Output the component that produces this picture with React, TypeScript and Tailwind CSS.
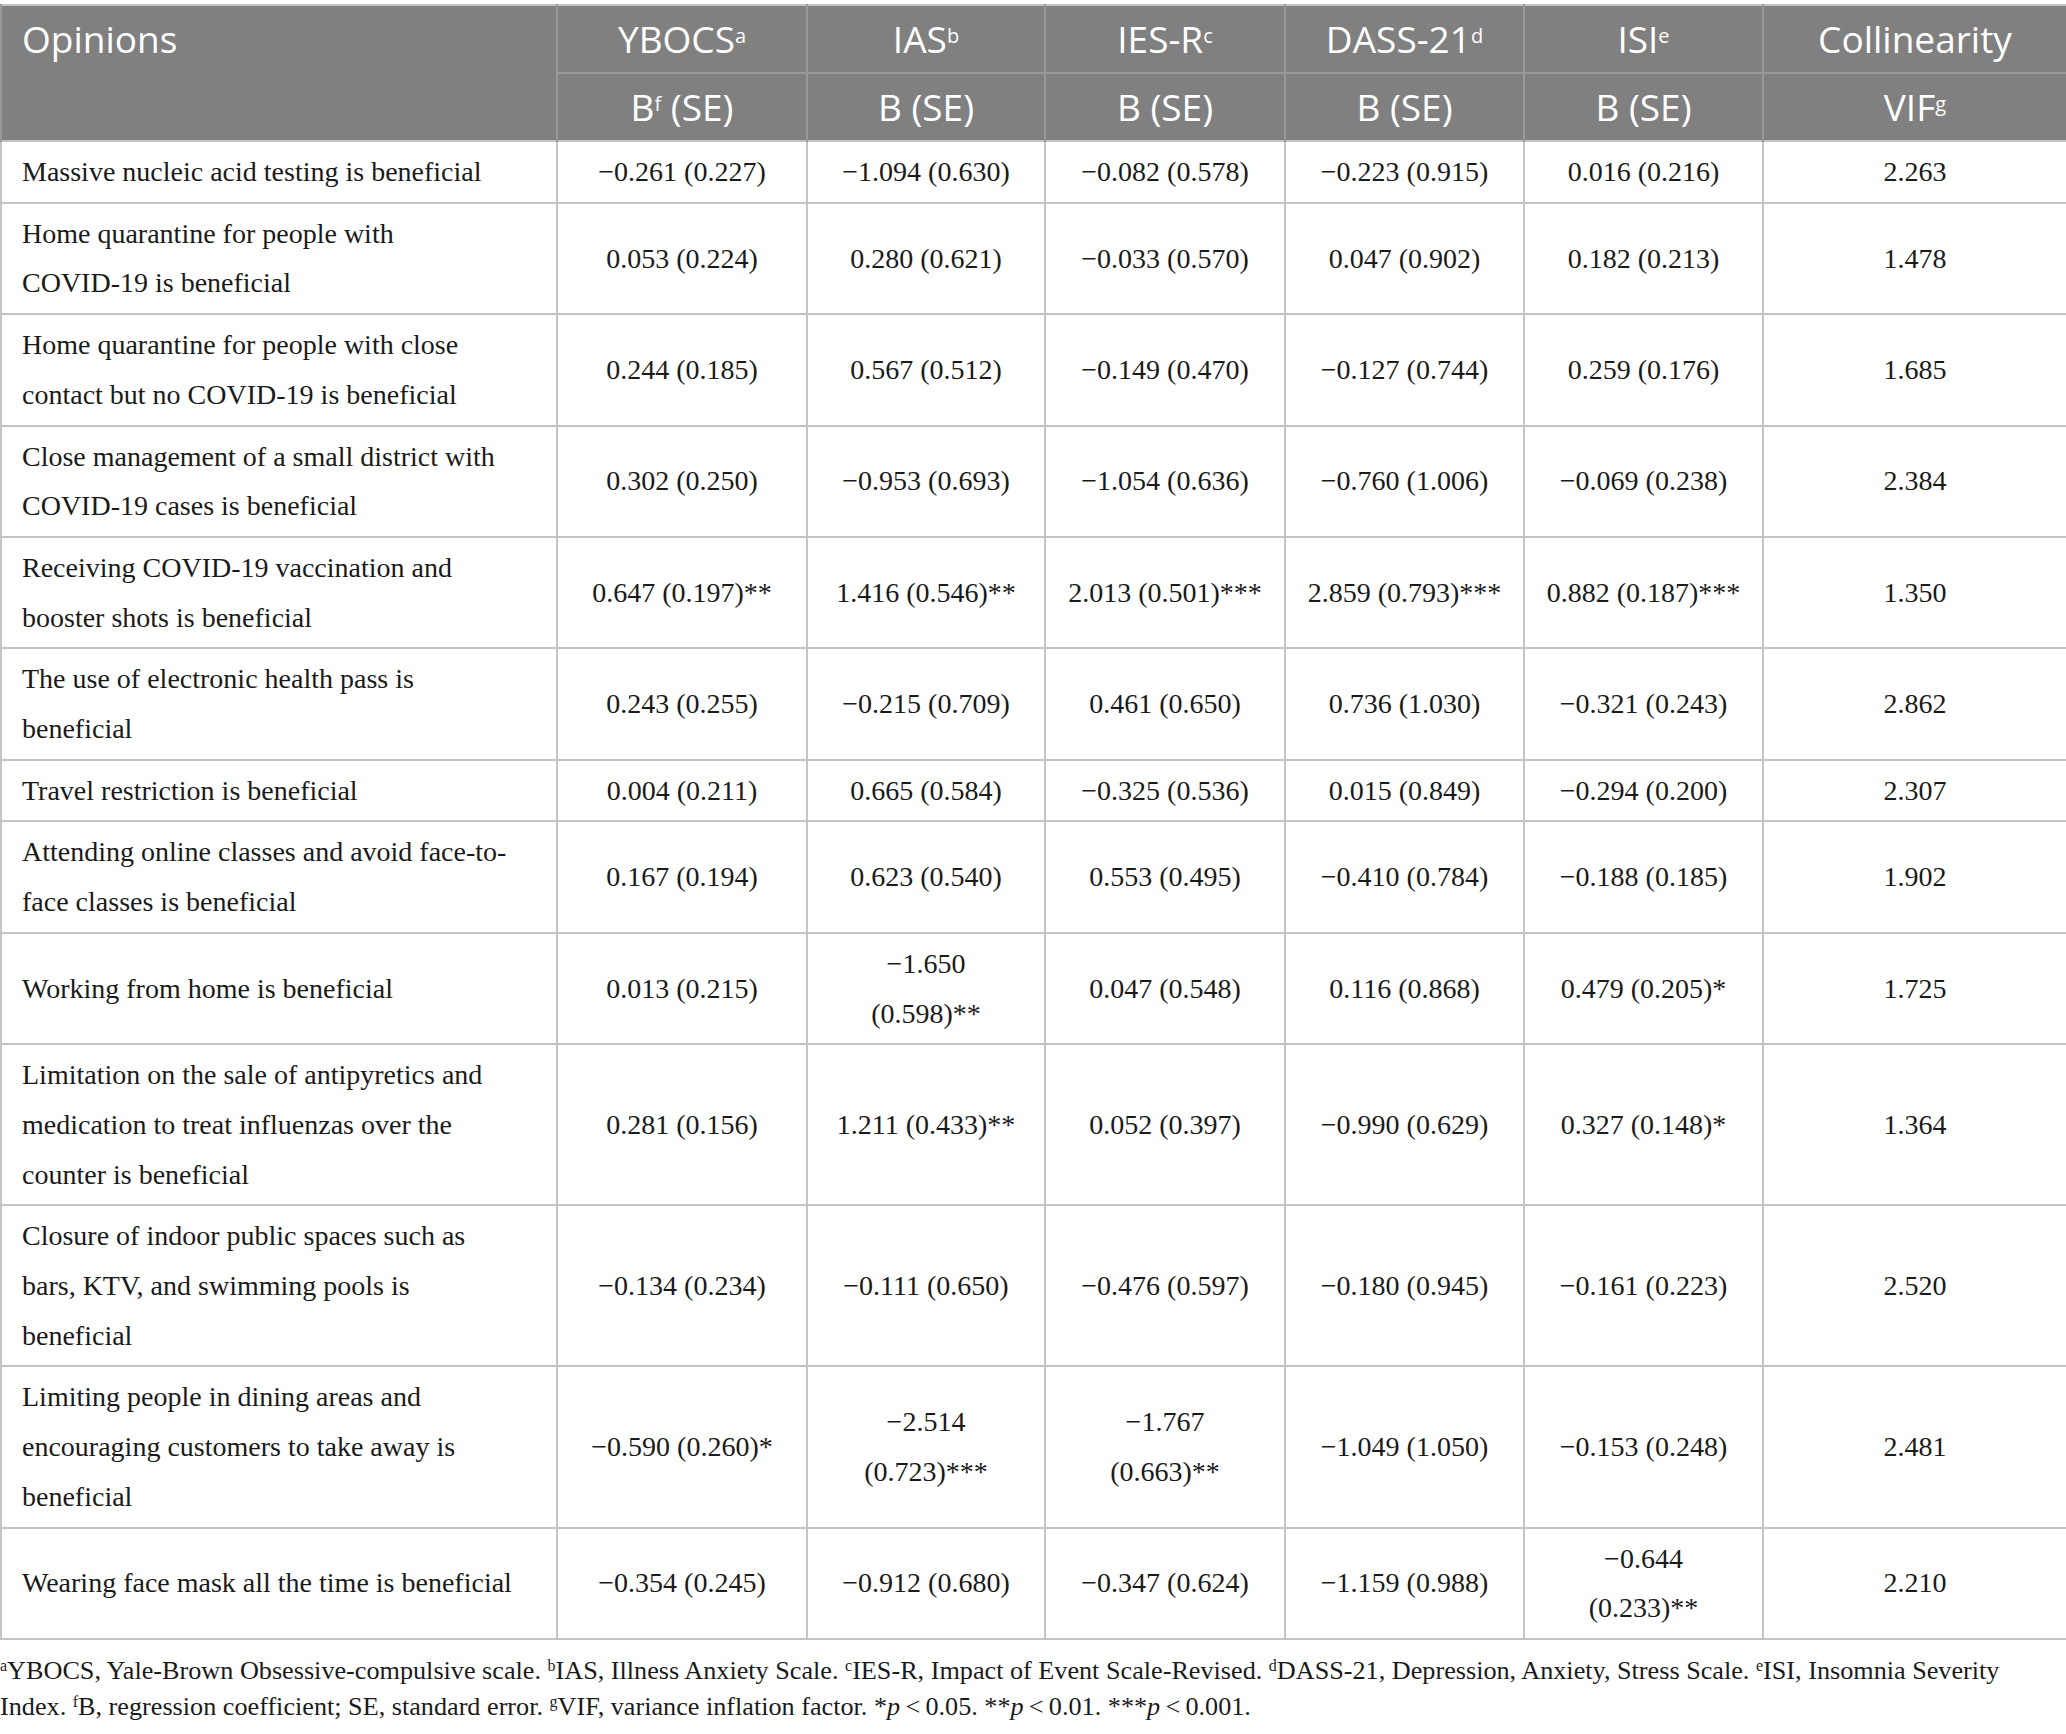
import React from "react";

type Row = {
  label: string[];
  values: string[][];
  vif: string;
};

const ROWS: Row[] = [
  {
    label: ["Massive nucleic acid testing is beneficial"],
    values: [["−0.261 (0.227)"], ["−1.094 (0.630)"], ["−0.082 (0.578)"], ["−0.223 (0.915)"], ["0.016 (0.216)"]],
    vif: "2.263",
  },
  {
    label: ["Home quarantine for people with", "COVID-19 is beneficial"],
    values: [["0.053 (0.224)"], ["0.280 (0.621)"], ["−0.033 (0.570)"], ["0.047 (0.902)"], ["0.182 (0.213)"]],
    vif: "1.478",
  },
  {
    label: ["Home quarantine for people with close", "contact but no COVID-19 is beneficial"],
    values: [["0.244 (0.185)"], ["0.567 (0.512)"], ["−0.149 (0.470)"], ["−0.127 (0.744)"], ["0.259 (0.176)"]],
    vif: "1.685",
  },
  {
    label: ["Close management of a small district with", "COVID-19 cases is beneficial"],
    values: [["0.302 (0.250)"], ["−0.953 (0.693)"], ["−1.054 (0.636)"], ["−0.760 (1.006)"], ["−0.069 (0.238)"]],
    vif: "2.384",
  },
  {
    label: ["Receiving COVID-19 vaccination and", "booster shots is beneficial"],
    values: [["0.647 (0.197)**"], ["1.416 (0.546)**"], ["2.013 (0.501)***"], ["2.859 (0.793)***"], ["0.882 (0.187)***"]],
    vif: "1.350",
  },
  {
    label: ["The use of electronic health pass is", "beneficial"],
    values: [["0.243 (0.255)"], ["−0.215 (0.709)"], ["0.461 (0.650)"], ["0.736 (1.030)"], ["−0.321 (0.243)"]],
    vif: "2.862",
  },
  {
    label: ["Travel restriction is beneficial"],
    values: [["0.004 (0.211)"], ["0.665 (0.584)"], ["−0.325 (0.536)"], ["0.015 (0.849)"], ["−0.294 (0.200)"]],
    vif: "2.307",
  },
  {
    label: ["Attending online classes and avoid face-to-", "face classes is beneficial"],
    values: [["0.167 (0.194)"], ["0.623 (0.540)"], ["0.553 (0.495)"], ["−0.410 (0.784)"], ["−0.188 (0.185)"]],
    vif: "1.902",
  },
  {
    label: ["Working from home is beneficial"],
    values: [["0.013 (0.215)"], ["−1.650", "(0.598)**"], ["0.047 (0.548)"], ["0.116 (0.868)"], ["0.479 (0.205)*"]],
    vif: "1.725",
  },
  {
    label: ["Limitation on the sale of antipyretics and", "medication to treat influenzas over the", "counter is beneficial"],
    values: [["0.281 (0.156)"], ["1.211 (0.433)**"], ["0.052 (0.397)"], ["−0.990 (0.629)"], ["0.327 (0.148)*"]],
    vif: "1.364",
  },
  {
    label: ["Closure of indoor public spaces such as", "bars, KTV, and swimming pools is", "beneficial"],
    values: [["−0.134 (0.234)"], ["−0.111 (0.650)"], ["−0.476 (0.597)"], ["−0.180 (0.945)"], ["−0.161 (0.223)"]],
    vif: "2.520",
  },
  {
    label: ["Limiting people in dining areas and", "encouraging customers to take away is", "beneficial"],
    values: [["−0.590 (0.260)*"], ["−2.514", "(0.723)***"], ["−1.767", "(0.663)**"], ["−1.049 (1.050)"], ["−0.153 (0.248)"]],
    vif: "2.481",
  },
  {
    label: ["Wearing face mask all the time is beneficial"],
    values: [["−0.354 (0.245)"], ["−0.912 (0.680)"], ["−0.347 (0.624)"], ["−1.159 (0.988)"], ["−0.644", "(0.233)**"]],
    vif: "2.210",
  },
];

const HEADERS: { name: string; sup: string }[] = [
  { name: "YBOCS", sup: "a" },
  { name: "IAS", sup: "b" },
  { name: "IES-R", sup: "c" },
  { name: "DASS-21", sup: "d" },
  { name: "ISI", sup: "e" },
];

function Lines({ lines }: { lines: string[] }) {
  return (
    <>
      {lines.map((line, i) => (
        <span key={i} className="block">
          {line}
        </span>
      ))}
    </>
  );
}

export default function App() {
  return (
    <div className="w-[2066px] bg-white pt-[4px] pb-[10px] text-[#1a1a1a]">
      <table className="w-full table-fixed border-collapse">
        <colgroup>
          <col className="w-[556px]" />
          <col className="w-[250px]" />
          <col className="w-[238px]" />
          <col className="w-[240px]" />
          <col className="w-[239px]" />
          <col className="w-[239px]" />
          <col className="w-[304px]" />
        </colgroup>
        <thead className="bg-[#7f807f] font-['Open_Sans',sans-serif] text-[37px] font-normal leading-[66px] text-white">
          <tr className="border-t-2 border-[#c4c4c4]">
            <th
              rowSpan={2}
              className="border-x-2 border-[#9a9a9a] pl-[20px] text-left align-top font-normal"
            >
              Opinions
            </th>
            {HEADERS.map((h) => (
              <th key={h.name} className="border-x-2 border-b-2 border-[#9a9a9a] text-center font-normal">
                {h.name}
                <sup className="text-[20px]">{h.sup}</sup>
              </th>
            ))}
            <th className="border-x-2 border-b-2 border-[#9a9a9a] text-center font-normal">Collinearity</th>
          </tr>
          <tr>
            <th className="border-x-2 border-[#9a9a9a] text-center font-normal">
              B<sup className="text-[20px]">f</sup> (SE)
            </th>
            {[0, 1, 2, 3].map((i) => (
              <th key={i} className="border-x-2 border-[#9a9a9a] text-center font-normal">
                B (SE)
              </th>
            ))}
            <th className="border-x-2 border-[#9a9a9a] text-center font-normal">
              VIF<sup className="text-[20px]">g</sup>
            </th>
          </tr>
        </thead>
        <tbody className="font-['Liberation_Serif',serif] text-[28px] leading-[49.7px]">
          {ROWS.map((row, r) => (
            <tr key={r}>
              <td className="border-2 border-[#c4c4c4] py-[5px] pl-[20px] pr-[8px] align-middle">
                <Lines lines={row.label} />
              </td>
              {row.values.map((v, i) => (
                <td key={i} className="border-2 border-[#c4c4c4] py-[5px] text-center align-middle">
                  <Lines lines={v} />
                </td>
              ))}
              <td className="border-2 border-[#c4c4c4] py-[5px] text-center align-middle">{row.vif}</td>
            </tr>
          ))}
        </tbody>
      </table>
      <p className="mt-[13px] font-['Liberation_Serif',serif] text-[26.2px] leading-[36px]">
        <sup className="text-[16px]">a</sup>YBOCS, Yale-Brown Obsessive-compulsive scale. <sup className="text-[16px]">b</sup>IAS, Illness Anxiety Scale.{" "}
        <sup className="text-[16px]">c</sup>IES-R, Impact of Event Scale-Revised. <sup className="text-[16px]">d</sup>DASS-21, Depression, Anxiety, Stress Scale.{" "}
        <sup className="text-[16px]">e</sup>ISI, Insomnia Severity
        <br />
        Index. <sup className="text-[16px]">f</sup>B, regression coefficient; SE, standard error. <sup className="text-[16px]">g</sup>VIF, variance inflation factor. *
        <i>p</i>&thinsp;&lt;&thinsp;0.05. **<i>p</i>&thinsp;&lt;&thinsp;0.01. ***<i>p</i>&thinsp;&lt;&thinsp;0.001.
      </p>
    </div>
  );
}
